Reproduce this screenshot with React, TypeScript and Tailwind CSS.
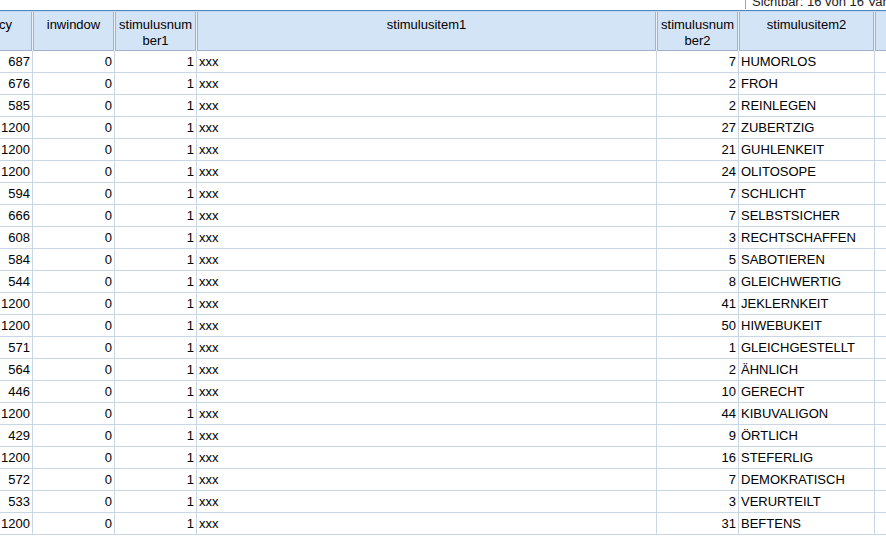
import React from "react";

const rows: [string, string, string, string, string, string][] = [
  ["687", "0", "1", "xxx", "7", "HUMORLOS"],
  ["676", "0", "1", "xxx", "2", "FROH"],
  ["585", "0", "1", "xxx", "2", "REINLEGEN"],
  ["1200", "0", "1", "xxx", "27", "ZUBERTZIG"],
  ["1200", "0", "1", "xxx", "21", "GUHLENKEIT"],
  ["1200", "0", "1", "xxx", "24", "OLITOSOPE"],
  ["594", "0", "1", "xxx", "7", "SCHLICHT"],
  ["666", "0", "1", "xxx", "7", "SELBSTSICHER"],
  ["608", "0", "1", "xxx", "3", "RECHTSCHAFFEN"],
  ["584", "0", "1", "xxx", "5", "SABOTIEREN"],
  ["544", "0", "1", "xxx", "8", "GLEICHWERTIG"],
  ["1200", "0", "1", "xxx", "41", "JEKLERNKEIT"],
  ["1200", "0", "1", "xxx", "50", "HIWEBUKEIT"],
  ["571", "0", "1", "xxx", "1", "GLEICHGESTELLT"],
  ["564", "0", "1", "xxx", "2", "ÄHNLICH"],
  ["446", "0", "1", "xxx", "10", "GERECHT"],
  ["1200", "0", "1", "xxx", "44", "KIBUVALIGON"],
  ["429", "0", "1", "xxx", "9", "ÖRTLICH"],
  ["1200", "0", "1", "xxx", "16", "STEFERLIG"],
  ["572", "0", "1", "xxx", "7", "DEMOKRATISCH"],
  ["533", "0", "1", "xxx", "3", "VERURTEILT"],
  ["1200", "0", "1", "xxx", "31", "BEFTENS"],
];

const headerCell =
  "h-[39px] shrink-0 border-l border-r border-b border-[#9fb3ca] bg-[#d4e4f7] mr-px pt-[5px] text-center leading-[16px] break-all";

function Header() {
  return (
    <div className="flex bg-[#eaf1fa]">
      <div className={`${headerCell} w-[81px]`}>latency</div>
      <div className={`${headerCell} w-[81px]`}>inwindow</div>
      <div className={`${headerCell} w-[81px] px-px`}>stimulusnumber1</div>
      <div className={`${headerCell} w-[459px]`}>stimulusitem1</div>
      <div className={`${headerCell} w-[81px] px-px`}>stimulusnumber2</div>
      <div className={`${headerCell} w-[135px]`}>stimulusitem2</div>
      <div className={`${headerCell} w-[100px]`}></div>
    </div>
  );
}

const cell =
  "h-[22px] shrink-0 border-r border-b border-[#c9d6e6] leading-[21px] whitespace-nowrap overflow-hidden";

function Row({ r }: { r: (typeof rows)[number] }) {
  return (
    <div className="flex">
      <div className={`${cell} w-[82px] text-right pr-[2px]`}>{r[0]}</div>
      <div className={`${cell} w-[82px] text-right pr-[2px]`}>{r[1]}</div>
      <div className={`${cell} w-[82px] text-right pr-[2px]`}>{r[2]}</div>
      <div className={`${cell} w-[460px] pl-[2px]`}>{r[3]}</div>
      <div className={`${cell} w-[82px] text-right pr-[2px]`}>{r[4]}</div>
      <div className={`${cell} w-[136px] pl-[2px]`}>{r[5]}</div>
      <div className={`${cell} w-[100px]`}></div>
    </div>
  );
}

export default function App() {
  return (
    <div
      className="w-[886px] h-[536px] overflow-hidden bg-white text-[13px] text-black"
      style={{ fontFamily: '"Liberation Sans", Arial, sans-serif' }}
    >
      <div className="h-[10px] flex justify-end">
        <div className="w-[141px] h-[9px] border-l border-[#a3a3a3] pl-[6px] overflow-hidden">
          <div className="leading-[13px] -mt-[5px] whitespace-nowrap text-[#222]">
            Sichtbar: 16 von 16 Variablen
          </div>
        </div>
      </div>
      <div className="h-px bg-[#4f86c4]" />
      <div className="h-px bg-[#c3d7ee]" />
      <div className="-ml-[49px] w-[1100px]">
        <Header />
        {rows.map((r, i) => (
          <Row key={i} r={r} />
        ))}
      </div>
    </div>
  );
}
